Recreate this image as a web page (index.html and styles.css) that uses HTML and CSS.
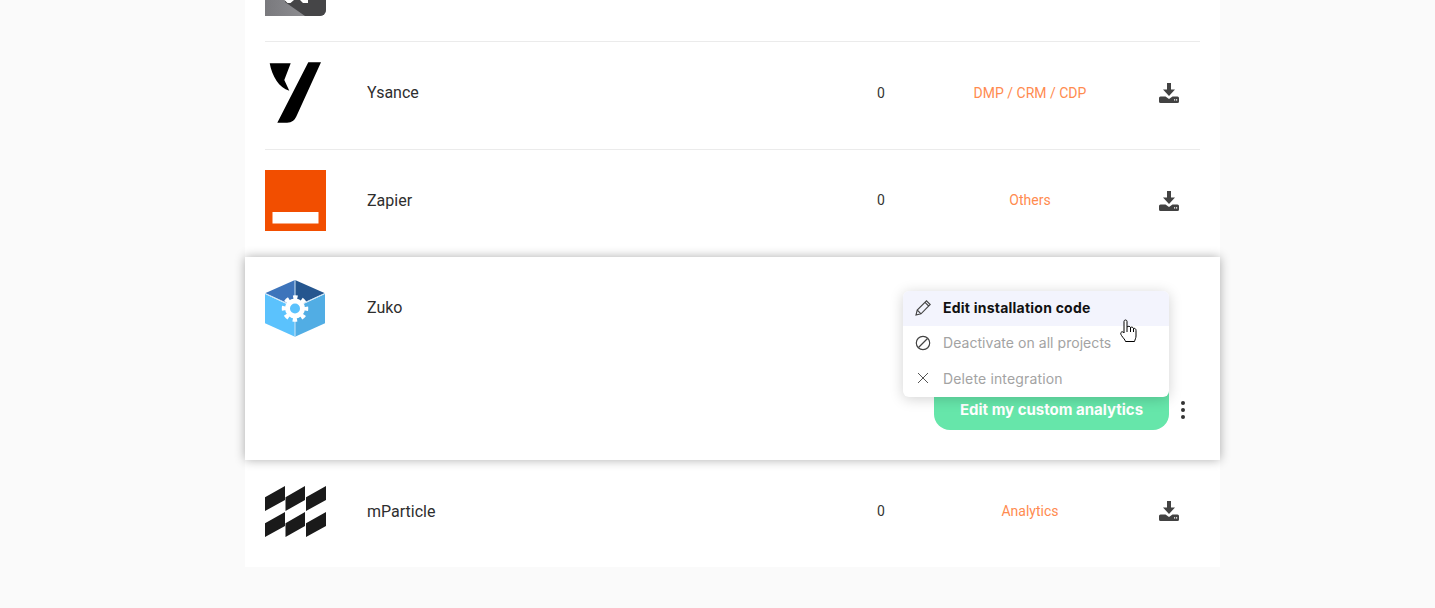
FILE: index.html
```html
<!DOCTYPE html>
<html lang="en">
<head>
<meta charset="utf-8">
<title>Integrations</title>
<link rel="stylesheet" href="styles.css">
</head>
<body>
<main class="list">
  <div class="stub">
    <svg class="logo-stub" width="61" height="16" viewBox="0 0 61 16">
      <defs>
        <clipPath id="stubclip"><path d="M0 0H61V10a6 6 0 0 1-6 6H0Z"/></clipPath>
        <linearGradient id="stubgrad" x1="0" x2="1" y1="0" y2="0"><stop offset="0" stop-color="#79797d"/><stop offset="1" stop-color="#98989c"/></linearGradient>
      </defs>
      <g clip-path="url(#stubclip)">
        <rect width="61" height="16" fill="url(#stubgrad)"/>
        <path d="M20 2 40 16H61V0H20Z" fill="#454547"/>
        <path d="M19.500 0H29L25.500 3H22.500ZM35 0H43V3H38Z" fill="#fff"/>
      </g>
    </svg>
  </div>

  <div class="row">
    <svg class="logo" width="61" height="61" viewBox="0 0 61 61">
      <path d="M4.700 1.300H25.700L19.300 18 24.300 28.700C14 26 7 14 4.700 1.300Z" fill="#000"/>
      <path d="M43.300.3H56L32 53C30 58 27 60.700 22 60.700H12.300Z" fill="#000"/>
    </svg>
    <span class="name">Ysance</span>
    <span class="count">0</span>
    <span class="cat">DMP / CRM / CDP</span>
    <svg class="dl" width="20" height="20" viewBox="0 0 20 20"><path d="M8 0H12V6.500H16L10 13 4 6.500H8Z"/><path d="M1.500 13.500H6.500L10 16 13.500 13.500H18.500A1.500 1.500 0 0 1 20 15V18.500A1.500 1.500 0 0 1 18.500 20H1.500A1.500 1.500 0 0 1 0 18.500V15A1.500 1.500 0 0 1 1.500 13.500Z"/><path d="M15 16.300h1.200v1.200H15ZM17 16.300h1.200v1.200H17Z" fill="#fff"/></svg>
  </div>

  <div class="row">
    <svg class="logo" width="61" height="61" viewBox="0 0 61 61">
      <rect width="61" height="61" fill="#f24e00"/>
      <rect x="7.500" y="42" width="46" height="11.500" fill="#fff"/>
    </svg>
    <span class="name">Zapier</span>
    <span class="count lift">0</span>
    <span class="cat lift">Others</span>
    <svg class="dl" width="20" height="20" viewBox="0 0 20 20"><path d="M8 0H12V6.500H16L10 13 4 6.500H8Z"/><path d="M1.500 13.500H6.500L10 16 13.500 13.500H18.500A1.500 1.500 0 0 1 20 15V18.500A1.500 1.500 0 0 1 18.500 20H1.500A1.500 1.500 0 0 1 0 18.500V15A1.500 1.500 0 0 1 1.500 13.500Z"/><path d="M15 16.300h1.200v1.200H15ZM17 16.300h1.200v1.200H17Z" fill="#fff"/></svg>
  </div>

  <section class="open">
    <div class="open-head">
      <svg class="logo" width="61" height="57" viewBox="0 0 61 57">
        <path d="M30 0V27L0 13.300Z" fill="#3d74bb"/>
        <path d="M30 0V27L60 13.300Z" fill="#25568f"/>
        <path d="M0 14V43.300L30 56.700V28Z" fill="#5bc2fd"/>
        <path d="M60 14V43.300L30 56.700V28Z" fill="#51ade4"/>
        <path d="M30 0V56.700M0 13.300 30 27 60 13.300" stroke="#cfe6f7" stroke-width="1" fill="none"/>
        <circle cx="30" cy="28.500" r="10" fill="#fff"/>
        <circle cx="30" cy="28.500" r="11" fill="none" stroke="#fff" stroke-width="4.500" stroke-dasharray="4.300 4.340" stroke-dashoffset="2.150"/>
        <circle cx="30" cy="28.500" r="5" fill="#5bc2fd"/>
      </svg>
      <span class="name">Zuko</span>
    </div>
    <div class="open-actions">
      <button class="btn-edit" type="button">Edit my custom analytics</button>
      <span class="kebab"><i></i><i></i><i></i></span>
    </div>
    <ul class="menu">
      <li class="menu-item is-active">
        <svg width="16" height="16" viewBox="0 0 16 16" fill="none" stroke="#444" stroke-width="1.100"><path d="M1 15 2.200 10 11.500 .8 15.200 4.500 6 13.800ZM2.200 10 6 13.800M10 2.300 13.700 6"/></svg>
        <span>Edit installation code</span>
      </li>
      <li class="menu-item">
        <svg width="16" height="16" viewBox="0 0 16 16" fill="none" stroke="#444" stroke-width="1.200"><circle cx="8" cy="8" r="6.700"/><path d="M3.500 12.500 12.500 3.500"/></svg>
        <span>Deactivate on all projects</span>
      </li>
      <li class="menu-item menu-item-last">
        <svg width="16" height="16" viewBox="0 0 16 16" fill="none" stroke="#555" stroke-width="1"><path d="M3 3 13 13M13 3 3 13"/></svg>
        <span>Delete integration</span>
      </li>
    </ul>
    <svg class="cursor" width="17" height="24" viewBox="0 0 17 24">
      <path d="M4 13V2.500C4 .5 7 .5 7 2.500V8C8 7 10 7 10.500 8.500 11.500 7.800 13 8 13.500 9.500 14.500 9 16 9.500 16 11.500V17C16 19 15 20.500 14.500 22.500H5.500C5 20.500 3.500 19.500 1.500 16.500.5 15 .5 13.500 1.500 13 2.500 12.500 3.500 13 4 14Z" fill="#fff" stroke="#000" stroke-width="1"/>
      <path d="M7 8V13M10.500 8.500V13M13.500 9.500V13" stroke="#000" stroke-width="1" fill="none"/>
    </svg>
  </section>

  <div class="row row-last">
    <svg class="logo" width="61" height="52" viewBox="0 0 61 52">
      <g fill="#1a1a1a">
        <path d="M0 12.300 20 1V15L0 26ZM0 38.300 20 27V41L0 52Z"/>
        <path d="M20.500 12.300 40 1V15L20.500 26ZM20.500 38.300 40 27V41L20.500 52Z"/>
        <path d="M41 12.300 61 1V15L41 26ZM41 38.300 61 27V41L41 52Z"/>
      </g>
    </svg>
    <span class="name">mParticle</span>
    <span class="count">0</span>
    <span class="cat">Analytics</span>
    <svg class="dl" width="20" height="20" viewBox="0 0 20 20"><path d="M8 0H12V6.500H16L10 13 4 6.500H8Z"/><path d="M1.500 13.500H6.500L10 16 13.500 13.500H18.500A1.500 1.500 0 0 1 20 15V18.500A1.500 1.500 0 0 1 18.500 20H1.500A1.500 1.500 0 0 1 0 18.500V15A1.500 1.500 0 0 1 1.500 13.500Z"/><path d="M15 16.300h1.200v1.200H15ZM17 16.300h1.200v1.200H17Z" fill="#fff"/></svg>
  </div>
</main>
</body>
</html>
```
FILE: styles.css
```css
* { box-sizing: border-box; }
html, body { margin: 0; height: 608px; overflow: hidden; }
body {
  background: #fafafa;
  font-family: Roboto, "Liberation Sans", sans-serif;
  color: #333;
}
.list {
  width: 975px;
  margin-left: 245px;
  padding: 0 20px;
  background: #fff;
}
.logo, .logo-stub, .dl { display: block; }
.stub {
  height: 42px;
  border-bottom: 1px solid #ebebeb;
}
.row {
  height: 108px;
  display: grid;
  grid-template-columns: 102px 1fr 60px 238px 40px;
  padding: 0 11px 6px 0;
  align-items: center;
  border-bottom: 1px solid #ebebeb;
}
.row-last { height: 107px; border-bottom: 0; }
.row-last .name { margin-top: 2px; }
.name { font-size: 16px; line-height: 20px; color: #2e2e2e; }
.count { font-size: 14px; text-align: center; color: #333; }
.cat { font-size: 14px; text-align: center; color: #ff8b4f; }
.lift { margin-bottom: 1px; }
.dl { justify-self: center; fill: #424242; }
.open {
  position: relative;
  height: 203px;
  margin: -1px -20px 0;
  padding: 23px 20px 30px;
  display: flex;
  flex-direction: column;
  justify-content: space-between;
  background: #fff;
  box-shadow: 0 0 10px rgba(0, 0, 0, .32);
}
.open-head {
  display: grid;
  grid-template-columns: 102px 1fr;
  align-items: center;
}
.open-head .name { margin-top: -2px; }
.open-actions {
  display: flex;
  align-items: center;
  justify-content: flex-end;
  padding-right: 15px;
}
.btn-edit {
  width: 235px;
  height: 40px;
  padding: 0 0 2px;
  border: 0;
  border-radius: 0 0 16px 16px;
  background: #66e6aa;
  color: #fff;
  font: 700 15px Inter, "Open Sans", sans-serif;
}
.kebab {
  width: 4px;
  margin-left: 12px;
  display: flex;
  flex-direction: column;
  gap: 3px;
}
.kebab i {
  width: 4px;
  height: 4px;
  border-radius: 50%;
  background: #333;
}
.menu {
  position: absolute;
  left: 658px;
  top: 34px;
  width: 266px;
  margin: 0;
  padding: 0;
  list-style: none;
  background: #fff;
  border-radius: 6px;
  overflow: hidden;
  box-shadow: 0 2px 14px rgba(0, 0, 0, .18);
}
.menu-item {
  height: 35px;
  display: flex;
  align-items: center;
  gap: 12px;
  padding: 0 0 2px 12px;
  font: 400 14px Inter, "Open Sans", sans-serif;
  letter-spacing: .05px;
  color: #a3a3a3;
}
.menu-item-last { height: 36px; letter-spacing: .15px; }
.menu-item.is-active {
  background: #f3f4fd;
  color: #111;
  font-weight: 700;
  letter-spacing: .23px;
}
.cursor {
  position: absolute;
  left: 875px;
  top: 62px;
}
```
